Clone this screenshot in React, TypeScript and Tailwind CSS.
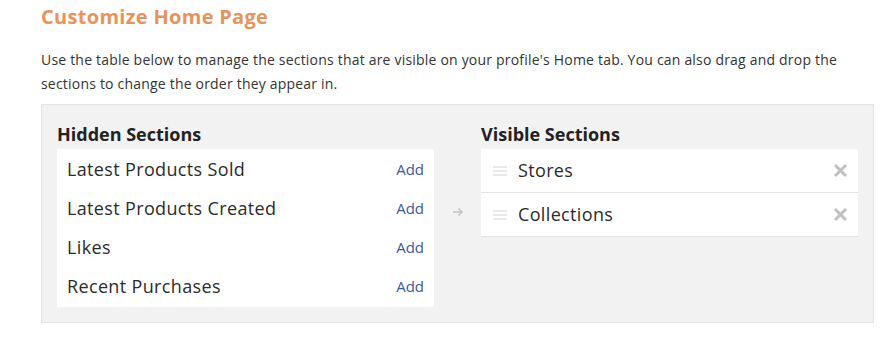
const hidden = ["Latest Products Sold", "Latest Products Created", "Likes", "Recent Purchases"];
const visible = ["Stores", "Collections"];

function Handle() {
  return (
    <svg width="14" height="10" viewBox="0 0 14 10" className="shrink-0">
      <path d="M0 1h14M0 5h14M0 9h14" stroke="#d4d4d4" strokeWidth="1" />
    </svg>
  );
}

function Cross() {
  return (
    <svg width="15" height="15" viewBox="0 0 15 15" className="shrink-0">
      <path d="M2 2l11 11M13 2 2 13" stroke="#c0c0c0" strokeWidth="3" />
    </svg>
  );
}

export default function App() {
  return (
    <div className="w-[882px] h-[343px] bg-white pl-[41px] pr-[8px] text-[#333]" style={{ fontFamily: "'Open Sans', sans-serif" }}>
      <h1 className="pt-[4px] text-[20px] font-bold leading-[26px] tracking-[0.3px] text-[#e8935a]">Customize Home Page</h1>
      <p className="mt-[18px] text-[14px] leading-[24px] tracking-[0.2px] text-[#333]">
        Use the table below to manage the sections that are visible on your profile's Home tab. You can also drag and drop the sections to change the order they appear in.
      </p>
      <div className="mt-[8px] flex border border-[#e3e3e3] bg-[#f2f2f2] px-[15px] pt-[17px] pb-[15px]">
        <div className="w-[377px]">
          <h2 className="text-[18px] font-bold leading-[24px] text-[#222]">Hidden Sections</h2>
          <ul className="mt-[3px] bg-white py-[1px]">
            {hidden.map((item) => (
              <li key={item} className="flex h-[39px] items-center justify-between pl-[10px] pr-[10px]">
                <span className="text-[18px] tracking-[0.35px] text-[#2b2b2b]">{item}</span>
                <a className="text-[15px] text-[#3b5a9a]">Add</a>
              </li>
            ))}
          </ul>
        </div>
        <div className="flex w-[47px] items-start justify-center pt-[85px]">
          <svg width="12" height="10" viewBox="0 0 12 10">
            <path d="M1 5h9M6.5 1.5 10 5l-3.5 3.5" stroke="#c4c4c4" strokeWidth="1.6" fill="none" />
          </svg>
        </div>
        <div className="w-[377px]">
          <h2 className="text-[18px] font-bold leading-[24px] text-[#222]">Visible Sections</h2>
          <ul className="mt-[3px] bg-white">
            {visible.map((item) => (
              <li key={item} className="flex h-[44px] items-center border-b border-[#e3e3e3] pl-[12px] pr-[10px]">
                <Handle />
                <span className="ml-[11px] flex-1 text-[18px] tracking-[0.35px] text-[#2b2b2b]">{item}</span>
                <Cross />
              </li>
            ))}
          </ul>
        </div>
      </div>
    </div>
  );
}
